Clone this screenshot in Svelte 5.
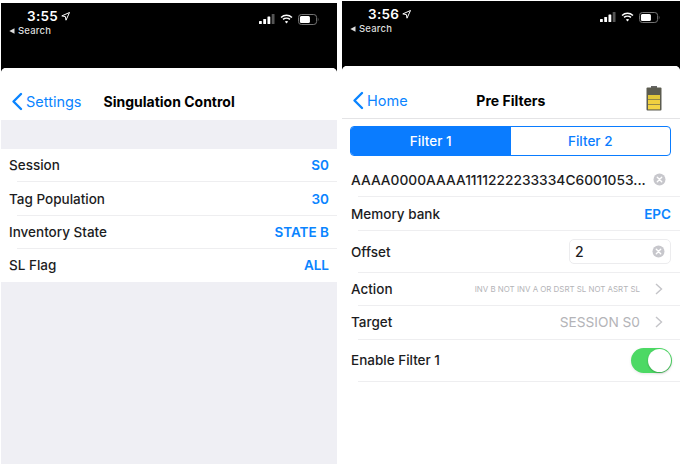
<script>
  const settings = [
    { label: 'Session', value: 'S0' },
    { label: 'Tag Population', value: '30' },
    { label: 'Inventory State', value: 'STATE B' },
    { label: 'SL Flag', value: 'ALL' }
  ];
</script>

{#snippet statusBar(time)}
  <div class="status">
    <div class="status-left">
      <div class="time">
        {time}
        <svg class="arrow" width="9" height="9" viewBox="0 0 9 9">
          <path d="M8.5 .5 L.8 3.9 L4.4 4.6 L5 8.2 Z" fill="none" stroke="#fff" stroke-width="1" stroke-linejoin="round" />
        </svg>
      </div>
      <div class="back-app">
        <svg width="6" height="6" viewBox="0 0 6 6"><path d="M5.5 .3 V5.7 L.3 3 Z" fill="#ddd" /></svg>
        Search
      </div>
    </div>
    <div class="status-right">
      <svg width="16" height="10" viewBox="0 0 17 10" preserveAspectRatio="none">
        <rect x="0" y="7" width="3" height="3" rx=".6" fill="#fff" />
        <rect x="4.5" y="5" width="3" height="5" rx=".6" fill="#fff" />
        <rect x="9" y="2.5" width="3" height="7.5" rx=".6" fill="#fff" />
        <rect x="13.5" y="0" width="3" height="10" rx=".6" fill="#555" />
      </svg>
      <svg width="13" height="10" viewBox="0 0 14 11" fill="none" stroke="#fff" stroke-width="1.7">
        <path d="M1 3.8 C4.5 .6 9.5 .6 13 3.8" />
        <path d="M3.2 6 C5.3 4.2 8.7 4.2 10.8 6" />
        <path d="M7 10.4 L5.2 8.3 C6.2 7.4 7.8 7.4 8.8 8.3 Z" fill="#fff" stroke="none" />
      </svg>
      <svg width="21" height="11" viewBox="0 0 22 11" preserveAspectRatio="none">
        <rect x=".5" y=".5" width="19" height="10" rx="3" fill="none" stroke="#777" />
        <rect x="2" y="2" width="10.5" height="7" rx="1.5" fill="#fff" />
        <path d="M20.8 3.8 C21.6 4.2 21.6 6.8 20.8 7.2 Z" fill="#777" />
      </svg>
    </div>
  </div>
{/snippet}

{#snippet chevron()}
  <svg class="chevron" width="8" height="12" viewBox="0 0 8 12" fill="none" stroke="#c4c4c8" stroke-width="1.4">
    <path d="M1 1 L6.5 6 L1 11" />
  </svg>
{/snippet}

{#snippet clear()}
  <svg class="clear" width="13" height="13" viewBox="0 0 13 13">
    <circle cx="6.5" cy="6.5" r="6" fill="#c7c7cc" />
    <path d="M4.3 4.3 L8.7 8.7 M8.7 4.3 L4.3 8.7" stroke="#fff" stroke-width="1.4" stroke-linecap="round" />
  </svg>
{/snippet}

{#snippet backChevron()}
  <svg width="12" height="19" viewBox="0 0 12 19" fill="none" stroke="#0a84ff" stroke-width="2.4" stroke-linecap="round" stroke-linejoin="round">
    <path d="M10 2 L2.5 9.5 L10 17" />
  </svg>
{/snippet}

<div class="page">
  <section class="phone left">
    {@render statusBar('3:55')}
    <div class="sheet gray">
      <nav class="nav">
        <a class="back">{@render backChevron()}Settings</a>
        <h1 class="title-left">Singulation Control</h1>
      </nav>
      <div class="settings">
        {#each settings as row, i}
          {#if i > 0}<div class="sep"></div>{/if}
          <div class="row setting">
            <span>{row.label}</span>
            <span class="blue">{row.value}</span>
          </div>
        {/each}
      </div>
    </div>
  </section>

  <section class="phone right">
    {@render statusBar('3:56')}
    <div class="sheet">
      <nav class="nav bordered">
        <a class="back">{@render backChevron()}Home</a>
        <h1 class="title-right">Pre Filters</h1>
        <svg class="battery" width="16" height="25" viewBox="0 0 16 25">
          <rect x="5" y="0" width="6" height="2" fill="#666" />
          <rect x=".5" y="1.5" width="15" height="23" rx="1" fill="#5c5c50" />
          <rect x="2" y="9" width="12" height="4.4" fill="#e3c83a" />
          <rect x="2" y="14" width="12" height="4.4" fill="#f0d040" />
          <rect x="2" y="19" width="12" height="4.4" fill="#f4d545" />
        </svg>
      </nav>

      <div class="segments">
        <div class="segment active">Filter 1</div>
        <div class="segment">Filter 2</div>
      </div>

      <div class="filters">
        <div class="row h33">
          <span class="epc">AAAA0000AAAA1111222233334C6001053...</span>
          {@render clear()}
        </div>
        <div class="sep"></div>
        <div class="row h33">
          <span>Memory bank</span>
          <span class="blue">EPC</span>
        </div>
        <div class="sep"></div>
        <div class="row h41">
          <span>Offset</span>
          <div class="input">2 {@render clear()}</div>
        </div>
        <div class="sep"></div>
        <div class="row h32">
          <span>Action</span>
          <div class="picker">
            <span class="tiny">INV B NOT INV A OR DSRT SL NOT ASRT SL</span>
            {@render chevron()}
          </div>
        </div>
        <div class="sep"></div>
        <div class="row h33">
          <span>Target</span>
          <div class="picker">
            <span class="muted">SESSION S0</span>
            {@render chevron()}
          </div>
        </div>
        <div class="sep"></div>
        <div class="row h41">
          <span>Enable Filter 1</span>
          <div class="toggle"><div class="knob"></div></div>
        </div>
        <div class="sep"></div>
      </div>
    </div>
  </section>
</div>

<style>
  :global(body) {
    margin: 0;
    background: #fff;
  }

  .page {
    width: 680px;
    height: 464px;
    display: flex;
    overflow: hidden;
    background: #fff;
    font-family: Inter, "Liberation Sans", sans-serif;
    color: #1c1c1e;
  }

  .phone {
    display: flex;
    flex-direction: column;
    background: #000;
  }

  .left {
    width: 336px;
    margin: 3px 0 0 1px;
  }

  .right {
    width: 338px;
    margin: 1px 0 0 5px;
  }

  .status {
    height: 65px;
    display: flex;
    justify-content: space-between;
    color: #fff;
    box-sizing: border-box;
    padding: 5px 18px 0 8px;
  }

  .right .status {
    padding-right: 20px;
  }

  .status-left {
    display: flex;
    flex-direction: column;
  }

  .time {
    font-size: 13.5px;
    font-weight: 600;
    line-height: 16px;
    padding-left: 18px;
    letter-spacing: .3px;
    display: flex;
    align-items: center;
    gap: 3px;
  }

  .back-app {
    font-size: 9.5px;
    font-weight: 500;
    color: #ddd;
    line-height: 13px;
    display: flex;
    align-items: center;
    gap: 3px;
    letter-spacing: .2px;
  }

  .status-right {
    display: flex;
    align-items: center;
    gap: 5px;
    height: 20px;
    margin-top: 1px;
  }

  .sheet {
    flex: 1;
    background: #fff;
    border-radius: 5px 5px 0 0;
    overflow: hidden;
  }

  .sheet.gray {
    background: #efeff4;
  }

  .nav {
    height: 52px;
    background: #fff;
    display: flex;
    align-items: center;
    padding: 14px 9px 0 10px;
    box-sizing: border-box;
  }

  .nav.bordered {
    height: 53px;
    padding-top: 16px;
    border-bottom: 1px solid #e4e4e6;
    justify-content: space-between;
  }

  .back {
    display: flex;
    align-items: center;
    gap: 3px;
    color: #0a84ff;
    font-size: 14.5px;
  }

  h1 {
    margin: 0;
    font-size: 14px;
    font-weight: 700;
    color: #000;
  }

  .title-left {
    margin-left: 22px;
  }

  .title-right {
    margin-left: -32px;
  }

  .battery {
    margin-top: -3px;
    margin-right: 9px;
  }

  .settings {
    margin-top: 29px;
    background: #fff;
  }

  .row {
    display: flex;
    align-items: center;
    justify-content: space-between;
    font-size: 13.5px;
    font-weight: 500;
    padding: 0 9px;
  }

  .setting {
    height: 32.4px;
    padding: 0 8px;
  }

  .sep {
    height: 1px;
    margin-left: 16px;
    background: #eeeef0;
  }

  .blue {
    color: #0a84ff;
    font-weight: 600;
  }

  .segments {
    margin: 7px 9px 0 8px;
    height: 30px;
    display: flex;
    box-sizing: border-box;
    border: 1px solid #0a7cff;
    border-radius: 4px;
    overflow: hidden;
  }

  .segment {
    flex: 1;
    display: flex;
    align-items: center;
    justify-content: center;
    color: #0a7cff;
    font-size: 13.5px;
    font-weight: 500;
  }

  .segment.active {
    background: #0a7cff;
    color: #fff;
  }

  .filters {
    margin-top: 7px;
  }

  .h32 { height: 31.5px; }
  .h33 { height: 33px; }
  .h41 { height: 41px; }

  .epc {
    font-size: 13.75px;
    font-weight: 500;
    white-space: nowrap;
  }

  .clear {
    flex: none;
  }

  .h33 > .clear {
    margin-right: 5px;
  }

  .input {
    width: 102px;
    height: 25px;
    box-sizing: border-box;
    border: 1px solid #ececee;
    border-radius: 5px;
    display: flex;
    align-items: center;
    justify-content: space-between;
    padding: 0 5px;
    font-size: 14px;
  }

  .picker {
    display: flex;
    align-items: center;
    gap: 15px;
    padding-right: 8px;
  }

  .tiny {
    font-size: 7.9px;
    font-weight: 400;
    color: #b4b4b8;
    white-space: nowrap;
  }

  .muted {
    font-size: 13.7px;
    font-weight: 400;
    color: #b4b4b8;
  }

  .toggle {
    width: 40px;
    height: 25px;
    margin-right: -1px;
    border-radius: 13px;
    background: #4cd964;
    display: flex;
    justify-content: flex-end;
    align-items: center;
    padding-right: 1px;
    box-shadow: 0 1px 3px rgba(0, 0, 0, .1);
  }

  .knob {
    width: 23px;
    height: 23px;
    border-radius: 50%;
    background: #fff;
    box-shadow: 0 1px 2px rgba(0, 0, 0, .25);
  }
</style>
